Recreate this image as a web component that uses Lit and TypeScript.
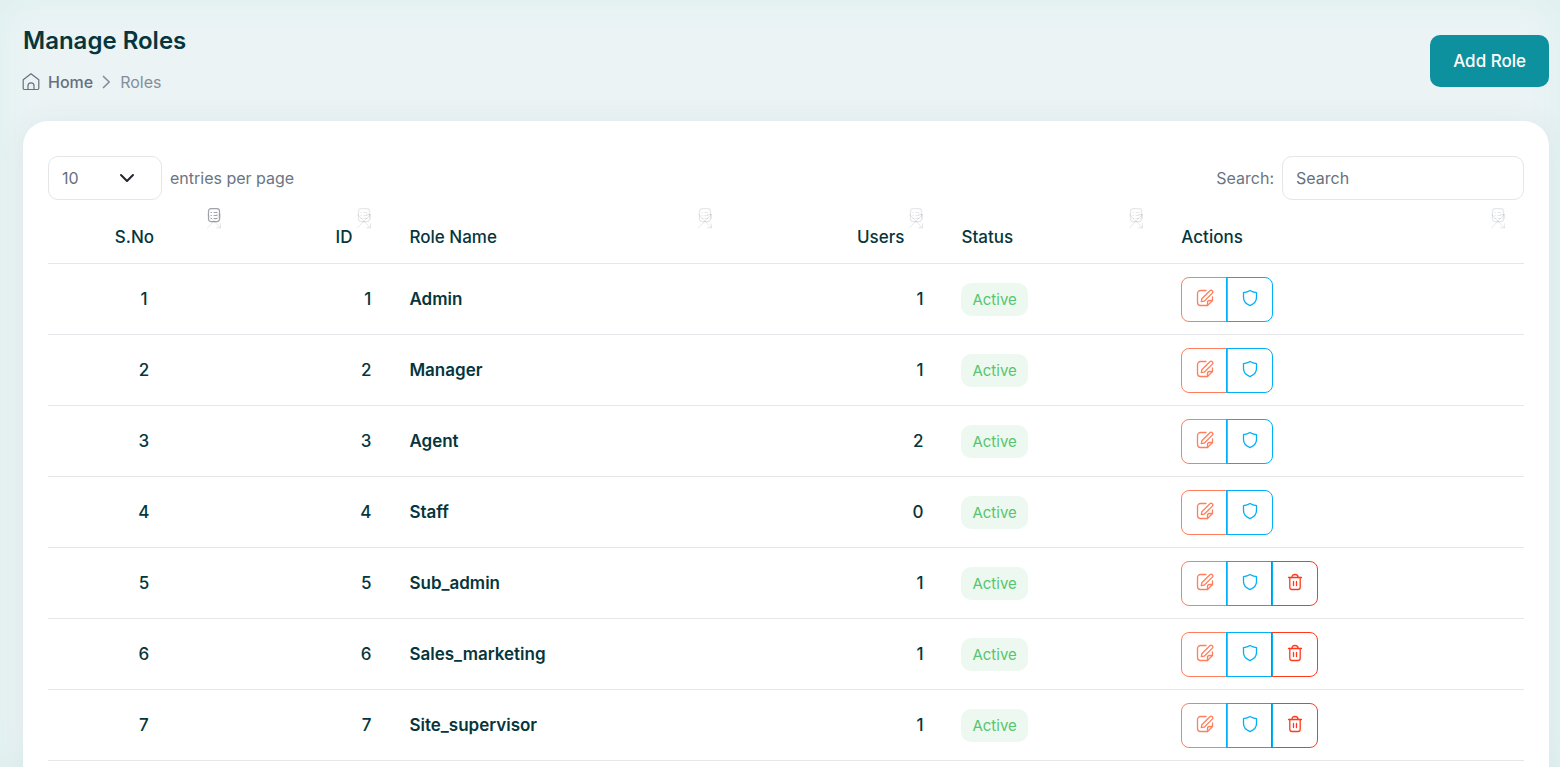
import { LitElement, html, css, svg } from "lit";
import { customElement, property, state } from "lit/decorators.js";
import { classMap } from "lit/directives/class-map.js";

interface Role {
  id: number;
  name: string;
  users: number;
  removable: boolean;
}

interface Column {
  key: string;
  label: string;
  align: "left" | "center" | "right";
}

const COLUMNS: Column[] = [
  { key: "sno", label: "S.No", align: "center" },
  { key: "id", label: "ID", align: "right" },
  { key: "name", label: "Role Name", align: "left" },
  { key: "users", label: "Users", align: "right" },
  { key: "status", label: "Status", align: "left" },
  { key: "actions", label: "Actions", align: "left" },
];

const ROLES: Role[] = [
  { id: 1, name: "Admin", users: 1, removable: false },
  { id: 2, name: "Manager", users: 1, removable: false },
  { id: 3, name: "Agent", users: 2, removable: false },
  { id: 4, name: "Staff", users: 0, removable: false },
  { id: 5, name: "Sub_admin", users: 1, removable: true },
  { id: 6, name: "Sales_marketing", users: 1, removable: true },
  { id: 7, name: "Site_supervisor", users: 1, removable: true },
];

const editPaths = svg`
  <path d="M10 1.500H4.500a3 3 0 0 0-3 3v9a3 3 0 0 0 3 3h7l5-5V8"/>
  <path d="M11.500 16.500v-3a2 2 0 0 1 2-2h3"/>
  <path d="M5.300 12.700l.5-2.900L13.900 1.700a1.600 1.600 0 0 1 2.400 2.400l-8.100 8.100z"/>`;

const shieldPaths = svg`
  <path d="M9 1.500c1.900 1.200 4 1.800 6.500 2.100v5c0 3.900-2.600 6.500-6.500 8-3.900-1.500-6.500-4.100-6.500-8v-5C5 3.300 7.100 2.700 9 1.500z"/>`;

const trashPaths = svg`
  <path d="M2.500 4.500h13"/>
  <path d="M5.900 4.500c0-2 1-3 3.100-3s3.100 1 3.100 3"/>
  <path d="M3.800 4.500v9.700a2.300 2.300 0 0 0 2.300 2.300h5.800a2.300 2.300 0 0 0 2.300-2.300V4.500"/>
  <path d="M7.500 8.500v4M10.500 8.500v4"/>`;

@customElement("role-actions")
class RoleActions extends LitElement {
  @property({ type: Boolean }) removable = false;
  @property() name = "";

  static styles = css`
    :host { display: flex; }
    .action {
      box-sizing: border-box;
      width: 47px;
      height: 45px;
      padding: 0 0 3px;
      display: flex;
      align-items: center;
      justify-content: center;
      background: transparent;
      border: 1px solid currentColor;
      cursor: pointer;
    }
    .action + .action { margin-left: -2px; }
    .action:first-child { border-radius: 8px 0 0 8px; }
    .action:last-child { border-radius: 0 8px 8px 0; }
    .edit { color: #ff7f5c; }
    .guard { color: #00b0f8; }
    .remove { color: #ff3a1d; }
    .icon {
      width: 18px;
      height: 18px;
      fill: none;
      stroke: currentColor;
      stroke-width: 1.3;
      stroke-linecap: round;
      stroke-linejoin: round;
    }
  `;

  render() {
    return html`
      <button class="action edit" type="button" aria-label="Edit ${this.name}">
        <svg class="icon" viewBox="0 0 18 18">${editPaths}</svg>
      </button>
      <button class="action guard" type="button" aria-label="Permissions of ${this.name}">
        <svg class="icon" viewBox="0 0 18 18">${shieldPaths}</svg>
      </button>
      ${this.removable
        ? html`<button class="action remove" type="button" aria-label="Delete ${this.name}">
            <svg class="icon" viewBox="0 0 18 18">${trashPaths}</svg>
          </button>`
        : null}
    `;
  }
}

@customElement("app-root")
class AppRoot extends LitElement {
  @state() private sorted = "sno";

  static styles = css`
    :host {
      display: block;
      box-sizing: border-box;
      min-height: 100vh;
      padding: 24px 11px 0 23px;
      font-family: Inter, "Noto Sans", sans-serif;
      color: #06363c;
      background: #ebf3f5;
      box-shadow: inset 0 0 36px #dcf0ed;
      overflow: hidden;
    }
    .top {
      display: flex;
      justify-content: space-between;
      align-items: flex-start;
      height: 97px;
    }
    .title {
      margin: 0;
      font-size: 24px;
      line-height: 34px;
      font-weight: 600;
    }
    .crumbs {
      display: flex;
      align-items: center;
      margin-top: 14px;
      font-size: 16px;
      line-height: 20px;
      color: #848e9a;
    }
    .home {
      display: flex;
      align-items: center;
      gap: 8px;
      color: #66707e;
      font-weight: 500;
      text-decoration: none;
    }
    .house { width: 18px; height: 18px; margin-left: -1px; }
    .crumb-sep { width: 9px; height: 14px; margin: 0 9px; }
    .line {
      fill: none;
      stroke: currentColor;
      stroke-linecap: round;
      stroke-linejoin: round;
    }
    .add {
      margin-top: 11px;
      padding: 0 23px;
      height: 52px;
      border: 0;
      border-radius: 10px;
      background: #0e919e;
      color: #fff;
      font: 500 17px Inter, sans-serif;
      cursor: pointer;
    }
    .card {
      box-sizing: border-box;
      min-height: calc(100vh - 121px + 40px);
      margin-bottom: -40px;
      padding: 35px 25px 0;
      border-radius: 25px 25px 0 0;
      background: #fff;
      box-shadow: 0 0 30px rgba(20, 70, 80, 0.06);
    }
    .tools {
      display: flex;
      justify-content: space-between;
      align-items: center;
      font-size: 16px;
      color: #6b7583;
    }
    .length, .search { display: flex; align-items: center; gap: 8px; }
    .picker { position: relative; color: #23272e; }
    .select, .input {
      box-sizing: border-box;
      height: 44px;
      border: 1px solid #e4e6e8;
      border-radius: 10px;
      background: #fff;
      padding: 0 13px;
      font: 400 16px Inter, sans-serif;
      color: #66707e;
    }
    .select { display: block; width: 114px; appearance: none; }
    .input { width: 242px; }
    .input::placeholder { color: #66707e; opacity: 1; }
    .chevron {
      position: absolute;
      right: 27px;
      top: 17px;
      width: 16px;
      height: 10px;
      pointer-events: none;
    }
    .grid {
      width: 100%;
      table-layout: fixed;
      border-collapse: collapse;
      font-size: 17px;
      line-height: 24px;
      font-weight: 500;
    }
    .col-sno { width: 13%; }
    .col-id { width: 10.2%; }
    .col-name { width: 23.1%; }
    .col-users { width: 14.3%; }
    .col-status { width: 14.9%; }
    .head, .cell {
      padding: 0 19px;
      border-bottom: 1px solid #e6e7ea;
      text-align: left;
    }
    .head { height: 63px; vertical-align: top; }
    .cell { height: 70px; }
    .center { text-align: center; }
    .right { text-align: right; }
    .sort {
      width: 100%;
      display: flex;
      gap: 5px;
      padding: 8px 0 0;
      border: 0;
      background: none;
      font: 500 17px/24px Inter, sans-serif;
      color: inherit;
      text-align: inherit;
      cursor: pointer;
    }
    .label { flex: 1; padding-top: 17px; }
    .marks {
      width: 14px;
      height: 21px;
      color: #5f6672;
    }
    .up, .down { opacity: 0.15; }
    .on { opacity: 0.6; }
    .name { font-weight: 600; }
    .badge {
      display: inline-block;
      padding: 0 11px;
      border-radius: 10px;
      background: #edf9f0;
      color: #55c66f;
      font-size: 15px;
      line-height: 33px;
      font-weight: 400;
      vertical-align: middle;
    }
  `;

  private heading(c: Column) {
    return html`<th class="head ${c.align}" scope="col">
      <button class="sort" type="button" @click=${() => (this.sorted = c.key)}>
        <span class="label">${c.label}</span>
        <svg class="marks line" viewBox="0 0 14 21" aria-hidden="true">
          <g class=${classMap({ up: true, on: this.sorted === c.key })}>
            <rect x="1.500" y="0.600" width="11" height="13" rx="2.500" stroke-width="1.200"/>
            <path d="M4 4.500h.5M7 4.500h3M4 7.500h.5M7 7.500h3M4 10.500h.5M7 10.500h3"/>
          </g>
          <path class="down" d="M.5 19.800L13.400 6.500M9.500 6.500h3.900v4M.5 6.500l12.900 13.300M13.400 15.800v4h-4"/>
        </svg>
      </button>
    </th>`;
  }

  private row(r: Role, i: number) {
    return html`<tr>
      <td class="cell center">${i + 1}</td>
      <td class="cell right">${r.id}</td>
      <td class="cell name">${r.name}</td>
      <td class="cell right">${r.users}</td>
      <td class="cell"><span class="badge">Active</span></td>
      <td class="cell"><role-actions .name=${r.name} ?removable=${r.removable}></role-actions></td>
    </tr>`;
  }

  render() {
    return html`
      <header class="top">
        <div>
          <h1 class="title">Manage Roles</h1>
          <nav class="crumbs" aria-label="Breadcrumb">
            <a class="home" href="#">
              <svg class="house line" viewBox="0 0 18 18" stroke-width="1.200">
                <path d="M1.200 6.700L9 .8l7.800 5.900v8.600a1.200 1.200 0 0 1-1.200 1.200H2.400a1.200 1.200 0 0 1-1.200-1.200z"/>
                <path d="M6 16.500v-3.700a3 3 0 0 1 6 0v3.700"/>
              </svg>Home</a>
            <svg class="crumb-sep line" viewBox="0 0 9 14" stroke-width="1.700">
              <path d="M1.500 1.500L7.200 7l-5.700 5.500"/>
            </svg>
            <span>Roles</span>
          </nav>
        </div>
        <button class="add" type="button">Add Role</button>
      </header>
      <main class="card">
        <div class="tools">
          <div class="length">
            <div class="picker">
              <select class="select" id="length">
                <option>10</option>
                <option>25</option>
                <option>50</option>
                <option>100</option>
              </select>
              <svg class="chevron line" viewBox="0 0 16 10" stroke-width="2">
                <path d="M2 2l6 6 6-6"/>
              </svg>
            </div>
            <label for="length">entries per page</label>
          </div>
          <div class="search">
            <label for="search">Search:</label>
            <input class="input" id="search" type="search" placeholder="Search" />
          </div>
        </div>
        <table class="grid">
          <colgroup>
            <col class="col-sno" /><col class="col-id" /><col class="col-name" />
            <col class="col-users" /><col class="col-status" /><col />
          </colgroup>
          <thead><tr>${COLUMNS.map((c) => this.heading(c))}</tr></thead>
          <tbody>${ROLES.map((r, i) => this.row(r, i))}</tbody>
        </table>
      </main>
    `;
  }
}
